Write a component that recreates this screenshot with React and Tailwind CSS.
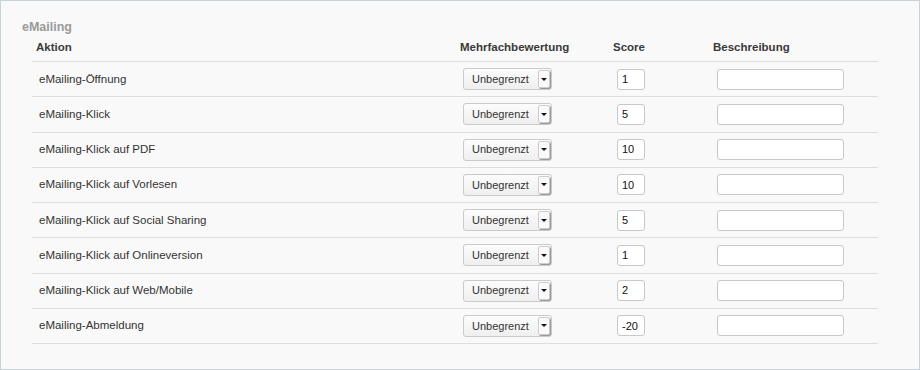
import React from "react";

const rows = [
    { name: "eMailing-Öffnung", score: "1" },
    { name: "eMailing-Klick", score: "5" },
    { name: "eMailing-Klick auf PDF", score: "10" },
    { name: "eMailing-Klick auf Vorlesen", score: "10" },
    { name: "eMailing-Klick auf Social Sharing", score: "5" },
    { name: "eMailing-Klick auf Onlineversion", score: "1" },
    { name: "eMailing-Klick auf Web/Mobile", score: "2" },
    { name: "eMailing-Abmeldung", score: "-20" },
];

function Select() {
    return (
        <div className="flex h-[22px] w-[89px] items-stretch rounded-[3px] border border-[#cacaca] bg-gradient-to-b from-[#fcfcfc] to-[#efefef]">
            <span className="flex flex-1 items-center pl-[8px] text-[11px] text-[#333]">Unbegrenzt</span>
            <span className="my-[1px] mr-[1px] flex w-[12px] items-center justify-center rounded-[2px] border border-[#cccccc] bg-[#fafafa] shadow-[1px_1px_0_#9a9a9a]">
                <span className="h-0 w-0 border-x-[3px] border-t-[3px] border-x-transparent border-t-[#111]" />
            </span>
        </div>
    );
}

export default function App() {
    return (
        <div className="h-[370px] w-[920px] border border-[#c6d4da] bg-[#f9f9f9] pl-[21px] pt-[18px] font-['Liberation_Sans',Arial,sans-serif]">
            <div className="text-[12.5px] font-bold leading-[16px] text-[#9a9a9a]">eMailing</div>

            <div className="ml-[10px] w-[846px]">
                <div className="flex h-[27px] items-start border-b border-[#dedede] pt-[5px] text-[11.5px] font-bold leading-[14px] text-[#3a3a3a]">
                    <div className="w-[424px] pl-[4px]">Aktion</div>
                    <div className="w-[153px] pl-[4px]">Mehrfachbewertung</div>
                    <div className="w-[100px] pl-[4px]">Score</div>
                    <div className="flex-1 pl-[4px]">Beschreibung</div>
                </div>

                {rows.map((row) => (
                    <div key={row.name} className="flex h-[35.25px] items-center border-b border-[#dedede] text-[11.5px] text-[#333]">
                        <div className="w-[424px] pl-[7px]">{row.name}</div>
                        <div className="w-[153px] pl-[7px]">
                            <Select />
                        </div>
                        <div className="w-[100px] pl-[8px]">
                            <div className="flex h-[21px] w-[28px] items-center rounded-[3px] border border-[#c8c8c8] bg-white pl-[4px] text-[11px] text-[#111]">
                                {row.score}
                            </div>
                        </div>
                        <div className="flex-1 pl-[8px]">
                            <div className="h-[21px] w-[127px] rounded-[3px] border border-[#c8c8c8] bg-white" />
                        </div>
                    </div>
                ))}
            </div>
        </div>
    );
}
